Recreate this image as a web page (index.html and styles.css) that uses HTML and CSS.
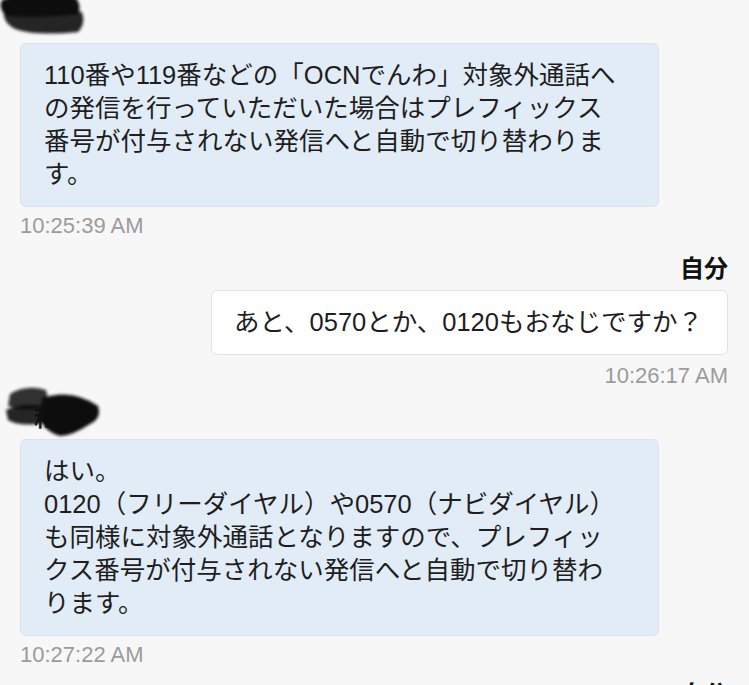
FILE: index.html
```html
<!DOCTYPE html>
<html lang="ja">
<head>
    <meta charset="UTF-8">
    <meta name="viewport" content="width=device-width, initial-scale=1.0">
    <title>チャット</title>
    <link rel="stylesheet" href="styles.css">
</head>
<body>
<main class="chat-log">
    <!-- operator -->
    <div class="sender-row sender-row-first">
        <svg class="redact redact-first" width="90" height="44" viewBox="0 0 90 44">
            <defs>
                <filter id="smudge"><feGaussianBlur stdDeviation="1.6"/></filter>
            </defs>
            <g filter="url(#smudge)" fill="#111">
                <path d="M4 6 Q30 -4 78 4 Q84 12 80 20 Q50 24 8 22 Q0 14 4 6 Z"/>
                <path d="M6 16 Q40 12 84 18 Q88 30 80 38 Q40 42 20 36 Q4 30 6 16 Z" opacity="0.9"/>
            </g>
        </svg>
    </div>
    <div class="bubble bubble-theirs">
        110番や119番などの「OCNでんわ」対象外通話への発信を行っていただいた場合はプレフィックス番号が付与されない発信へと自動で切り替わります。
    </div>
    <div class="stamp">10:25:39 AM</div>

    <!-- me -->
    <div class="mine-label">自分</div>
    <div class="bubble bubble-mine">あと、0570とか、0120もおなじですか？</div>
    <div class="stamp stamp-mine">10:26:17 AM</div>

    <!-- operator -->
    <div class="sender-row">
        <span class="sender-name">和</span>
        <svg class="redact redact-second" width="104" height="58" viewBox="0 0 104 58">
            <g filter="url(#smudge)" fill="#111">
                <path d="M8 10 Q24 0 44 6 Q48 16 40 24 Q20 28 6 22 Z" opacity="0.85"/>
                <path d="M4 26 Q20 18 44 22 Q46 34 36 40 Q16 42 6 36 Z" opacity="0.9"/>
                <path d="M40 14 Q70 4 96 22 Q100 34 88 40 Q70 52 58 52 Q44 48 38 36 Z"/>
                <path d="M40 36 Q60 30 78 38 Q70 50 56 50 Q44 48 40 36 Z" opacity="0.8"/>
            </g>
        </svg>
    </div>
    <div class="bubble bubble-theirs bubble-tall">
        はい。<br>0120（フリーダイヤル）や0570（ナビダイヤル）も同様に対象外通話となりますので、プレフィックス番号が付与されない発信へと自動で切り替わります。
    </div>
    <div class="stamp">10:27:22 AM</div>

    <div class="mine-label mine-label-last">自分</div>
</main>
</body>
</html>
```

FILE: styles.css
```css
html, body {
    margin: 0;
    padding: 0;
    background-color: #f7f7f7;
    overflow: hidden;
}

.chat-log {
    display: flex;
    flex-direction: column;
    padding: 0 21px 0 20px;
    font-family: "Liberation Sans", "Noto Sans CJK JP", sans-serif;
    color: #1e1e1e;
}

/* Sender name (redacted) */
.sender-row {
    position: relative;
    height: 51px;
}

.sender-row-first {
    height: 43px;
}

.sender-name {
    position: absolute;
    left: 14px;
    top: 12px;
    font-size: 22px;
    font-weight: bold;
}

.redact {
    position: absolute;
}

.redact-first {
    left: -22px;
    top: -6px;
}

.redact-second {
    left: -18px;
    top: -4px;
}

/* Bubbles */
.bubble {
    font-size: 25.5px;
    line-height: 33px;
    border-radius: 6px;
}

.bubble-theirs {
    align-self: flex-start;
    width: 581px;
    background-color: #e1ecf7;
    border: 1px solid #d9e3ee;
    padding: 15px 33px 15px 23px;
}

.bubble-mine {
    align-self: flex-end;
    margin-top: 6px;
    background-color: #ffffff;
    border: 1px solid #e0e2e5;
    padding: 15px 24px 15px 22px;
}

/* Timestamps */
.stamp {
    margin-top: 7px;
    font-size: 22px;
    line-height: 24px;
    color: #9b9b9b;
}

.stamp-mine {
    align-self: flex-end;
    margin-top: 9px;
}

.mine-label {
    align-self: flex-end;
    margin-top: 16px;
    font-size: 24px;
    line-height: 30px;
    font-weight: bold;
    color: #111;
}

.mine-label-last {
    margin-top: 13px;
}
```
